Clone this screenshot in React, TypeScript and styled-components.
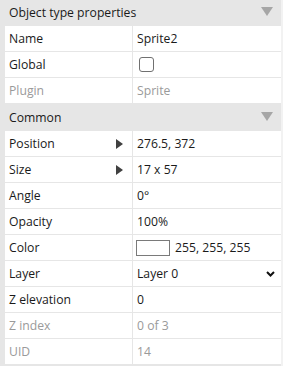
import styled, { createGlobalStyle } from "styled-components";

const GlobalStyle = createGlobalStyle`
  body {
    margin: 0;
    background: #e6e6e6;
    font-family: "Open Sans", "Noto Sans", sans-serif;
    font-size: 12.2px;
    color: #1a1a1a;
  }
`;

const Panel = styled.div`
  width: 283px;
  height: 366px;
  background: #e6e6e6;
  display: flex;
  flex-direction: column;
  overflow: hidden;
  box-sizing: border-box;
  padding-right: 2px;
  box-shadow: inset -2px 0 0 #f2f2f2;
`;

const Section = styled.div`
  padding-bottom: 2px;
`;

const Header = styled.div`
  height: 26px;
  display: flex;
  align-items: center;
  justify-content: space-between;
  padding: 0 8px 1px 9px;
  box-sizing: border-box;
`;

const Toggle = styled.span`
  width: 0;
  height: 0;
  border-left: 6px solid transparent;
  border-right: 6px solid transparent;
  border-top: 9px solid #a6a6a6;
  margin-top: -3px;
`;

const Rows = styled.div`
  display: flex;
  flex-direction: column;
  gap: 1px;
  padding-left: 5px;
`;

const Row = styled.div`
  height: 25px;
  display: grid;
  grid-template-columns: 127px 1fr;
  column-gap: 1px;
`;

const Cell = styled.div<{ $muted?: boolean }>`
  background: #fff;
  display: flex;
  align-items: center;
  padding: 0 4px;
  color: ${(p) => (p.$muted ? "#9a9a9a" : "#1a1a1a")};
  white-space: nowrap;
`;

const NameCell = styled(Cell)`
  justify-content: space-between;
  padding-right: 9px;
`;

const Expand = styled.span`
  width: 0;
  height: 0;
  border-top: 5px solid transparent;
  border-bottom: 5px solid transparent;
  border-left: 7px solid #404040;
`;

const Checkbox = styled.span`
  width: 13px;
  height: 13px;
  border: 1px solid #707070;
  border-radius: 3px;
  margin-left: 2px;
`;

const Swatch = styled.span`
  width: 32px;
  height: 14px;
  border: 1px solid #7a7a7a;
  background: #fff;
  margin: 0 5px 0 -1px;
`;

const SelectCell = styled(Cell)`
  justify-content: space-between;
  padding-right: 6px;
`;

type Prop = {
  name: string;
  value?: string;
  muted?: boolean;
  kind?: "check" | "expand" | "color" | "select";
};

const sections: { title: string; props: Prop[] }[] = [
  {
    title: "Object type properties",
    props: [
      { name: "Name", value: "Sprite2" },
      { name: "Global", kind: "check" },
      { name: "Plugin", value: "Sprite", muted: true },
    ],
  },
  {
    title: "Common",
    props: [
      { name: "Position", value: "276.5, 372", kind: "expand" },
      { name: "Size", value: "17 x 57", kind: "expand" },
      { name: "Angle", value: "0°" },
      { name: "Opacity", value: "100%" },
      { name: "Color", value: "255, 255, 255", kind: "color" },
      { name: "Layer", value: "Layer 0", kind: "select" },
      { name: "Z elevation", value: "0" },
      { name: "Z index", value: "0 of 3", muted: true },
      { name: "UID", value: "14", muted: true },
    ],
  },
];

const Chevron = () => (
  <svg width="9" height="6" viewBox="0 0 9 6">
    <path d="M1 1 L4.5 4.5 L8 1" fill="none" stroke="#111" strokeWidth="2" />
  </svg>
);

const PropRow = ({ p }: { p: Prop }) => (
  <Row>
    <NameCell $muted={p.muted}>
      {p.name}
      {p.kind === "expand" && <Expand />}
    </NameCell>
    {p.kind === "check" ? (
      <Cell>
        <Checkbox />
      </Cell>
    ) : p.kind === "color" ? (
      <Cell>
        <Swatch />
        {p.value}
      </Cell>
    ) : p.kind === "select" ? (
      <SelectCell>
        {p.value}
        <Chevron />
      </SelectCell>
    ) : (
      <Cell $muted={p.muted}>{p.value}</Cell>
    )}
  </Row>
);

export default function App() {
  return (
    <>
      <GlobalStyle />
      <Panel>
        {sections.map((s) => (
          <Section key={s.title}>
            <Header>
              {s.title}
              <Toggle />
            </Header>
            <Rows>
              {s.props.map((p) => (
                <PropRow key={p.name} p={p} />
              ))}
            </Rows>
          </Section>
        ))}
      </Panel>
    </>
  );
}
